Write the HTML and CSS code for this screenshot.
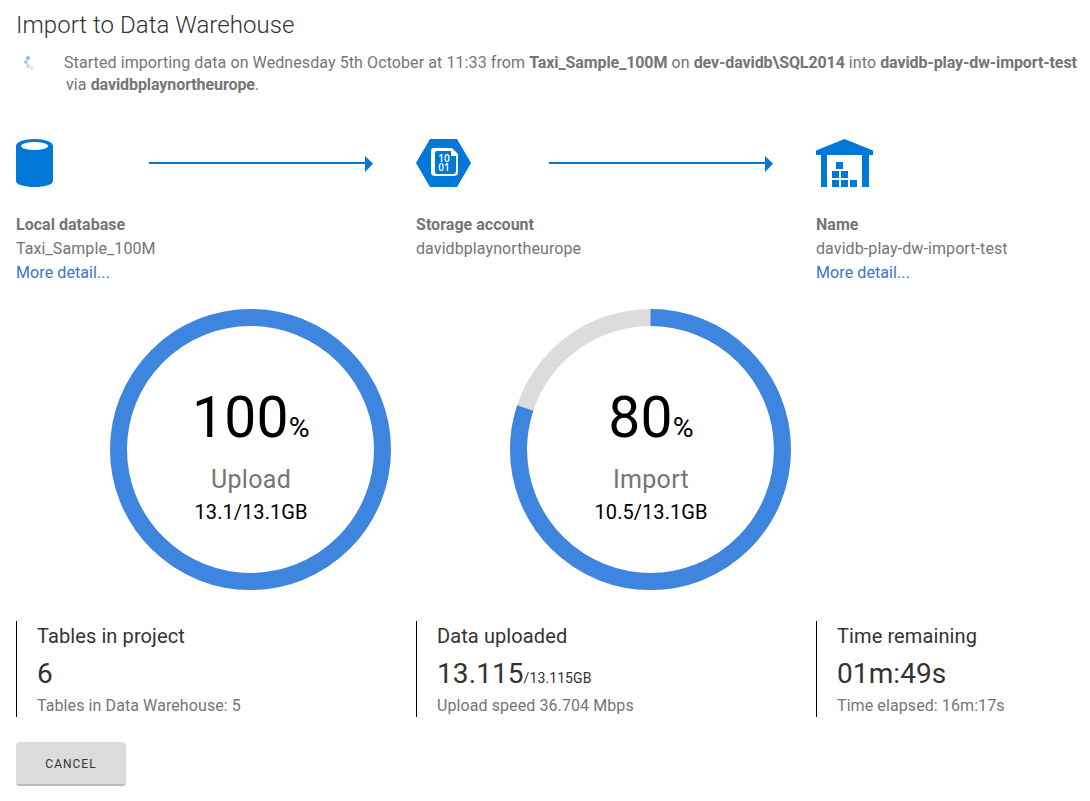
FILE: index.html
```html
<!DOCTYPE html>
<html lang="en">
<head>
<meta charset="utf-8">
<title>Import to Data Warehouse</title>
<link rel="stylesheet" href="styles.css">
</head>
<body>
<main class="page">
  <h1 class="title">Import to Data Warehouse</h1>
  <section class="status">
    <svg class="spinner" width="16" height="18" viewBox="0 0 16 18">
      <circle cx="6" cy="4" r="2" fill="#8db8ee"/>
      <circle cx="4" cy="8" r="2" fill="#a9c9f2"/>
      <circle cx="6" cy="12" r="2" fill="#c6dbf7"/>
      <circle cx="10" cy="14" r="2" fill="#dce9fa"/>
    </svg>
    <div class="message">
      <div class="line">Started importing data on Wednesday 5th October at 11:33 from <b>Taxi_Sample_100M</b> on <b>dev-davidb\SQL2014</b> into <b>davidb-play-dw-import-test</b></div>
      <div class="line second">via <b>davidbplaynortheurope</b>.</div>
    </div>
  </section>

  <section class="flow">
    <div class="node">
      <div class="graphic">
        <svg width="133" height="50" viewBox="0 0 133 50">
          <path d="M0 7C0 3 8 0 18.500 0S37 3 37 7V42C37 45.500 29 48 18.500 48S0 45.500 0 42Z" fill="#0078d7"/>
          <ellipse cx="18.500" cy="7" rx="13.500" ry="4" fill="#fff"/>
        </svg>
        <svg width="225" height="50" viewBox="0 0 225 50"><path d="M0 23H216V17L224 24.700L216 33V25H0Z" fill="#0078d7"/></svg>
      </div>
      <div class="name">Local database</div>
      <div class="value">Taxi_Sample_100M</div>
      <a class="link">More detail...</a>
    </div>
    <div class="node">
      <div class="graphic">
        <svg width="133" height="50" viewBox="0 0 133 50">
          <path d="M14 0H41L55 24L41 48H14L0 24Z" fill="#0078d7"/>
          <path d="M18 9H36L42 15V33Q42 37 38 37H19Q15 37 15 33V12Q15 9 18 9Z" fill="#fff"/>
          <path d="M20 12H35V17H40V33L38 35H20L19 33V14Z" fill="#0078d7"/>
          <g class="bits" text-anchor="middle" fill="#fff"><text x="28" y="23">10</text><text x="28" y="32">01</text></g>
        </svg>
        <svg width="225" height="50" viewBox="0 0 225 50"><path d="M0 23H216V17L224 24.700L216 33V25H0Z" fill="#0078d7"/></svg>
      </div>
      <div class="name">Storage account</div>
      <div class="value">davidbplaynortheurope</div>
    </div>
    <div class="node">
      <div class="graphic">
        <svg width="133" height="50" viewBox="0 0 133 50" fill="#0078d7">
          <path d="M0 11.500L28.500 0L57 11.500V16H53V48H46V16H11V48H5V16H0Z"/>
          <path d="M20 23H27V30H20ZM16 32H23V39H16ZM25 32H32V39H25ZM16 41H23V48H16ZM25 41H32V48H25ZM34 41H41V48H34Z"/>
        </svg>
      </div>
      <div class="name">Name</div>
      <div class="value">davidb-play-dw-import-test</div>
      <a class="link">More detail...</a>
    </div>
  </section>

  <section class="gauges">
    <div class="gauge">
      <svg class="ring" width="282" height="282" viewBox="0 0 282 282"><circle cx="140.500" cy="140.500" r="132" fill="none" stroke="#3d85de" stroke-width="17"/></svg>
      <div class="reading">
        <div class="percent">100<small>%</small></div>
        <div class="stage">Upload</div>
        <div class="amount">13.1/13.1GB</div>
      </div>
    </div>
    <div class="gauge">
      <svg class="ring" width="282" height="282" viewBox="0 0 282 282">
        <circle cx="140.500" cy="140.500" r="132" fill="none" stroke="#dcdcdc" stroke-width="17"/>
        <circle cx="140.500" cy="140.500" r="132" fill="none" stroke="#3d85de" stroke-width="17" pathLength="100" stroke-dasharray="80.100 19.900" transform="rotate(-90 140.500 140.500)"/>
      </svg>
      <div class="reading">
        <div class="percent">80<small>%</small></div>
        <div class="stage">Import</div>
        <div class="amount">10.5/13.1GB</div>
      </div>
    </div>
  </section>

  <section class="stats">
    <div class="stat">
      <div class="label">Tables in project</div>
      <div class="figure">6</div>
      <div class="note">Tables in Data Warehouse: 5</div>
    </div>
    <div class="stat">
      <div class="label">Data uploaded</div>
      <div class="figure">13.115<small>/13.115GB</small></div>
      <div class="note">Upload speed 36.704 Mbps</div>
    </div>
    <div class="stat">
      <div class="label">Time remaining</div>
      <div class="figure">01m:49s</div>
      <div class="note">Time elapsed: 16m:17s</div>
    </div>
  </section>
  <button class="cancel" type="button">CANCEL</button>
</main>
</body>
</html>
```
FILE: styles.css
```css
* { box-sizing: border-box; }
body { margin: 0; background: #fff; color: #757575; font: 16px/24px Roboto, sans-serif; letter-spacing: .09px; overflow: hidden; }
.page { padding: 8px 0 0 16px; white-space: nowrap; }
svg { display: block; }
b { font-weight: 700; }
.title { margin: 0; font-size: 24px; line-height: 34px; font-weight: 300; color: #333; letter-spacing: .05px; }
.status { display: flex; height: 97px; padding-top: 10px; }
.spinner { margin: 2px 26px 0 6px; }
.message { line-height: 22px; }
.message b { letter-spacing: -.09px; }
.second { padding-left: 2px; }
.flow, .stats { display: grid; grid-template-columns: 400px 400px 1fr; }
.flow { height: 170px; }
.graphic { display: flex; height: 74px; }
.bits { font: 600 10px "Open Sans", sans-serif; letter-spacing: 0; }
.name { font-weight: 700; letter-spacing: .03px; }
.link { color: #3a76cc; }
.gauges { display: flex; gap: 118px; height: 312px; padding-left: 94px; }
.gauge { display: grid; width: 282px; height: 282px; }
.ring, .reading { grid-area: 1 / 1; }
.reading { padding-top: 76px; text-align: center; }
.percent { height: 66px; font-size: 57px; line-height: 66px; color: #000; letter-spacing: .2px; }
.percent small { font-size: 28.5px; }
.stage { margin-top: 14px; font-size: 25px; line-height: 30px; letter-spacing: .3px; }
.amount { margin-top: 7px; font-size: 20px; line-height: 20px; color: #000; letter-spacing: .05px; }
.stat { height: 96px; padding: 3px 0 0 20px; border-left: 1px solid #000; }
.label { font-size: 20px; line-height: 24px; color: #333; letter-spacing: .1px; }
.figure { height: 32px; font-size: 28px; line-height: 32px; margin: 10px 0 4px; color: #333; }
.figure small { font-size: 14px; line-height: 16px; }
.note { line-height: 24px; }
.cancel { display: block; width: 110px; height: 44px; margin-top: 25px; padding: 1px 0 0; border: 0; border-bottom: 2px solid #b7b7b7; border-radius: 4px; background: #dcdcdc; color: #333; font: 12px Roboto, sans-serif; letter-spacing: 1px; }
```
